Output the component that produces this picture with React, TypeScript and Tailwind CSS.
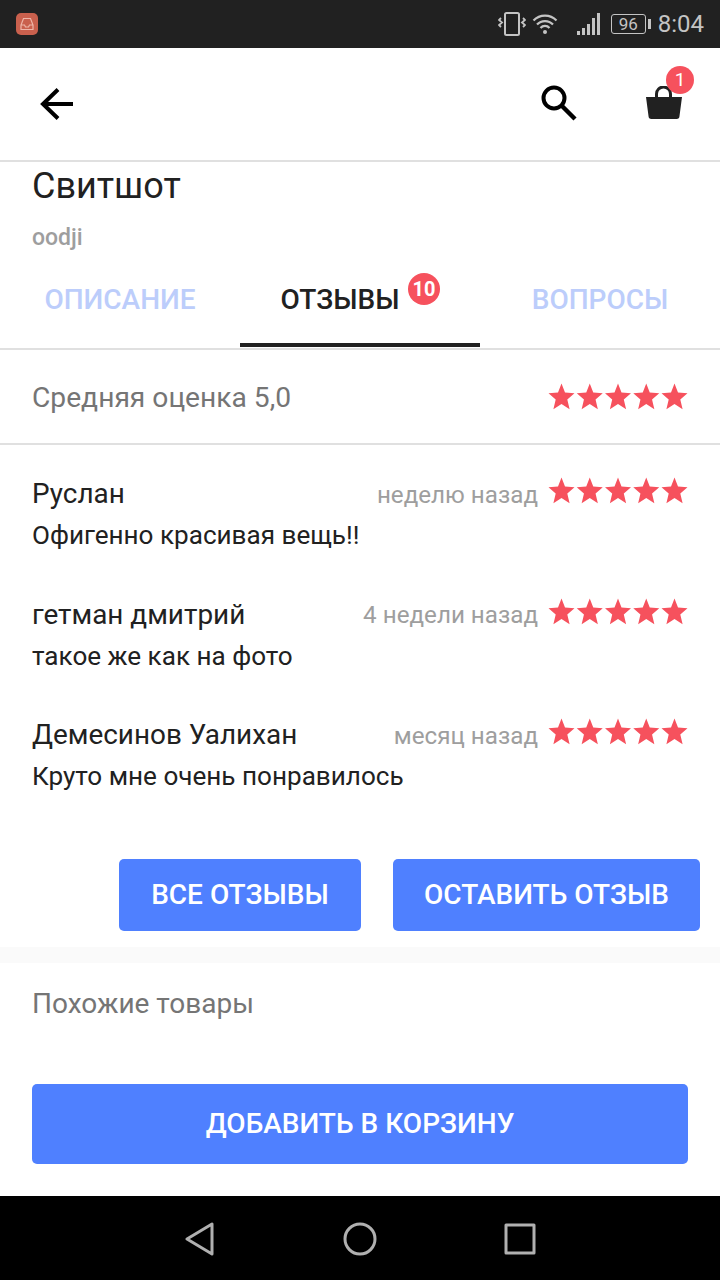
import React from 'react';

const reviews = [
  { name: 'Руслан', when: 'неделю назад', text: 'Офигенно красивая вещь!!' },
  { name: 'гетман дмитрий', when: '4 недели назад', text: 'такое же как на фото' },
  { name: 'Демесинов Уалихан', when: 'месяц назад', text: 'Круто мне очень понравилось' },
];

const Stars = () => (
  <svg width="140" height="28" viewBox="0 0 140 28" className="block">
    {[0, 1, 2, 3, 4].map(i => (
      <path
        key={i}
        transform={`translate(${i * 28.25} 0)`}
        d="M13.500 0.500l3.500 9 9.500.8-7.200 6.300 2.300 9.600-8.100-5.200-8.100 5.200 2.300-9.600L.5 10.300l9.500-.8z"
        fill="#f6515d"
      />
    ))}
  </svg>
);

const StatusBar = () => (
  <div className="flex h-12 items-center bg-[#212121] pl-4 pr-4 text-[#c4c4c4]">
    <div className="flex h-[22px] w-[22px] items-center justify-center rounded-[5px] bg-[#c9604d]">
      <svg width="14" height="14" viewBox="0 0 14 14" fill="none" stroke="#eeb5a8" strokeWidth="1.2">
        <path d="M3.500 1.500h7L13 8v4.500H1V8zM1 8h3.500l1 2h3l1-2H13" />
      </svg>
    </div>
    <div className="ml-auto flex items-center">
      <svg width="28" height="26" viewBox="0 0 28 26" fill="none" stroke="#c4c4c4" strokeWidth="2">
        <rect x="7" y="2" width="14" height="22" rx="1.500" />
        <path d="M3 7L1 9l3 2.500-3 2.500 2 2 M25 7l2 2-3 2.500 3 2.500-2 2" strokeWidth="1.800" />
      </svg>
      <svg className="ml-[6px]" width="26" height="22" viewBox="0 0 26 22" fill="none" stroke="#c4c4c4" strokeWidth="2.200">
        <path d="M1.500 7.500a16 16 0 0 1 23 0M5 11.500a11 11 0 0 1 16 0M8.500 15a6 6 0 0 1 9 0" />
        <circle cx="13" cy="19" r="2" fill="#c4c4c4" stroke="none" />
      </svg>
      <svg className="ml-[19px]" width="24" height="24" viewBox="0 0 24 24" fill="#c4c4c4">
        <rect x="0" y="19" width="3" height="4" />
        <rect x="5" y="16" width="3" height="7" />
        <rect x="10" y="12" width="3" height="11" />
        <rect x="15" y="6" width="3" height="17" />
        <rect x="20" y="1" width="3" height="22" />
      </svg>
      <div className="ml-[10px] flex h-5 w-[35px] items-center justify-center rounded-[3px] border border-[#c4c4c4] text-[17px] leading-none">
        96
      </div>
      <div className="ml-[2px] h-[10px] w-[3px] bg-[#c4c4c4]" />
      <span className="ml-[7px] text-[24px] leading-none">8:04</span>
    </div>
  </div>
);

export default function App() {
  return (
    <div className="flex h-[1280px] w-[720px] flex-col overflow-hidden bg-white font-['Roboto',sans-serif]">
      <StatusBar />

      {/* Header */}
      <div className="flex h-[114px] shrink-0 items-center border-b-2 border-[#e0e0e0]">
        <svg className="ml-[40px]" width="34" height="34" viewBox="0 0 34 34" fill="none" stroke="#000" strokeWidth="4">
          <path d="M33 17H4M18 2.500L3 17l15 14.500" />
        </svg>
        <svg className="ml-auto mb-[2px]" width="38" height="38" viewBox="0 0 38 38" fill="none" stroke="#000" strokeWidth="4">
          <circle cx="14" cy="14" r="10.500" />
          <path d="M21.500 21.500l13.500 13.500" strokeWidth="4.400" />
        </svg>
        <div className="relative ml-[68px] mr-[38px] h-[36px] w-[36px]">
          <svg width="36" height="36" viewBox="0 0 36 36">
            <path d="M10.500 12V8a7 7 0 0 1 14 0v4" fill="none" stroke="#212121" strokeWidth="3" />
            <path d="M0 11h36l-2.500 19a3 3 0 0 1-3 3H5.500a3 3 0 0 1-3-3z" fill="#212121" />
          </svg>
          <div className="absolute right-[-12px] top-[-20px] flex h-7 w-7 items-center justify-center rounded-full bg-[#f6515d] text-[19px] text-white">
            1
          </div>
        </div>
      </div>

      {/* Product title */}
      <div className="h-[96px] shrink-0 px-8">
        <div className="text-[36px] leading-[48px] text-[#212121]">Свитшот</div>
        <div className="mt-[13px] text-[23px] font-medium leading-[30px] text-[#9e9e9e]">oodji</div>
      </div>

      {/* Tabs */}
      <div className="flex h-[92px] shrink-0 border-b-2 border-[#e0e0e0]">
        <div className="flex w-[240px] justify-center pt-[22px] text-[28px] font-medium leading-[40px] text-[#bccdfb]">ОПИСАНИЕ</div>
        <div className="relative mb-px flex w-[240px] justify-center border-b-4 border-[#212121] pr-[40px] pt-[22px] text-[28px] font-medium leading-[40px] text-[#212121]">
          ОТЗЫВЫ
          <span className="absolute left-[168px] top-[15px] flex h-8 w-8 items-center justify-center rounded-full bg-[#f6515d] text-[20px] font-bold text-white">10</span>
        </div>
        <div className="flex w-[240px] justify-center pt-[22px] text-[28px] font-medium leading-[40px] text-[#bccdfb]">ВОПРОСЫ</div>
      </div>

      {/* Average */}
      <div className="flex h-[95px] shrink-0 items-center justify-between border-b-2 border-[#e0e0e0] pl-8 pr-[32px]">
        <span className="mt-[3px] text-[28.2px] text-[#757575]">Средняя оценка 5,0</span>
        <Stars />
      </div>

      {/* Reviews */}
      <div className="flex h-[502px] shrink-0 flex-col pt-[27px]">
        {reviews.map(r => (
          <div key={r.name} className="h-[120.5px] shrink-0 pl-8 pr-[32px]">
            <div className="flex h-[44px] items-center">
              <span className="text-[27.9px] text-[#212121]">{r.name}</span>
              <span className="ml-auto mr-[10px] mt-[2px] text-[24.2px] text-[#9e9e9e]">{r.when}</span>
              <div className="mb-[6px]"><Stars /></div>
            </div>
            <div className="text-[26.1px] leading-[38px] text-[#212121]">{r.text}</div>
          </div>
        ))}
        <div className="mt-auto flex justify-end gap-8 pb-[16px] pr-5">
          <div className="flex h-[72px] w-[242px] items-center justify-center rounded-[5px] bg-[#4f80ff] text-[28px] font-medium text-white">ВСЕ ОТЗЫВЫ</div>
          <div className="flex h-[72px] w-[307px] items-center justify-center rounded-[5px] bg-[#4f80ff] text-[28px] font-medium text-white">ОСТАВИТЬ ОТЗЫВ</div>
        </div>
      </div>

      <div className="h-4 shrink-0 bg-[#fafafa]" />

      <div className="flex-1 px-8 pt-[22px] text-[28px] leading-[38px] text-[#757575]">Похожие товары</div>

      <div className="h-[112px] shrink-0 px-8">
        <div className="flex h-20 items-center justify-center rounded-[5px] bg-[#4f80ff] text-[28px] font-medium text-white">ДОБАВИТЬ В КОРЗИНУ</div>
      </div>

      {/* Android nav */}
      <div className="flex h-[84px] shrink-0 items-center justify-center gap-[127px] bg-black pt-[1px]">
        <svg width="32" height="34" viewBox="0 0 32 34" fill="none" stroke="#b0b0b0" strokeWidth="3" strokeLinejoin="round">
          <path d="M28 2v30L3 17z" />
        </svg>
        <svg width="34" height="34" viewBox="0 0 34 34" fill="none" stroke="#b0b0b0" strokeWidth="3">
          <circle cx="17" cy="17" r="15" />
        </svg>
        <svg width="32" height="32" viewBox="0 0 32 32" fill="none" stroke="#b0b0b0" strokeWidth="3" strokeLinejoin="round">
          <rect x="2" y="2" width="28" height="28" />
        </svg>
      </div>
    </div>
  );
}
